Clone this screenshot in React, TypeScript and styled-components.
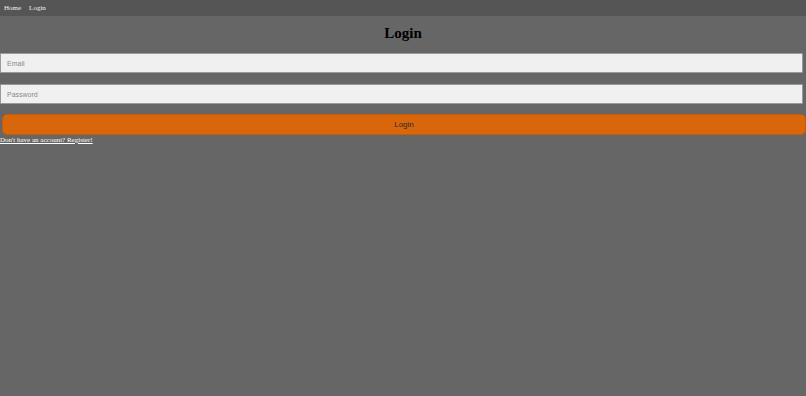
import styled, { createGlobalStyle } from "styled-components";

const GlobalStyle = createGlobalStyle`
  html, body {
    margin: 0;
    padding: 0;
    background: #666666;
    min-height: 100%;
  }
  body {
    font-family: "Liberation Serif", "Times New Roman", serif;
    overflow: hidden;
  }
  * { box-sizing: border-box; }
`;

const Page = styled.div`
  width: 806px;
  height: 396px;
  background: #666666;
`;

const NavBar = styled.nav`
  display: flex;
  align-items: center;
  gap: 8px;
  height: 16px;
  padding: 0 4px;
  background: #555555;
  a {
    font-family: "Liberation Serif", serif;
    font-size: 7px;
    color: #f2f2f2;
    text-decoration: none;
  }
`;

const Form = styled.form`
  display: flex;
  flex-direction: column;
  h1 {
    font-family: "Liberation Serif", serif;
    font-weight: 700;
    font-size: 15px;
    color: #000;
    text-align: center;
    margin: 9px 0 12px;
    line-height: 16px;
  }
`;

const Input = styled.input<{ $last?: boolean }>`
  width: 803px;
  height: 20px;
  margin: 0 0 ${(p) => (p.$last ? 10 : 11)}px;
  padding: 0 6px;
  background: #f0f0f0;
  border: 1px solid #9a9a9a;
  border-radius: 1px;
  font-family: "Liberation Sans", Arial, sans-serif;
  font-size: 7px;
  outline: none;
  &::placeholder {
    color: #8a8a8a;
  }
`;

const Button = styled.button`
  width: 804px;
  height: 21px;
  margin: 0 0 0 2px;
  background: #d9660a;
  border: 1px solid #c45c08;
  border-radius: 5px;
  color: #2b2b2b;
  font-family: "Liberation Sans", Arial, sans-serif;
  font-size: 8px;
  cursor: pointer;
`;

const Footer = styled.p`
  margin: 0;
  font-family: "Liberation Serif", serif;
  font-size: 7px;
  line-height: 10px;
  a {
    color: #ffffff;
    text-decoration: underline;
  }
`;

export default function App() {
  return (
    <>
      <GlobalStyle />
      <Page>
        <NavBar>
          <a href="#">Home</a>
          <a href="#">Login</a>
        </NavBar>
        <Form onSubmit={(e) => e.preventDefault()}>
          <h1>Login</h1>
          <Input type="email" placeholder="Email" />
          <Input type="password" placeholder="Password" $last />
          <Button type="submit">Login</Button>
        </Form>
        <Footer>
          <a href="#">Don't have an account? Register!</a>
        </Footer>
      </Page>
    </>
  );
}
